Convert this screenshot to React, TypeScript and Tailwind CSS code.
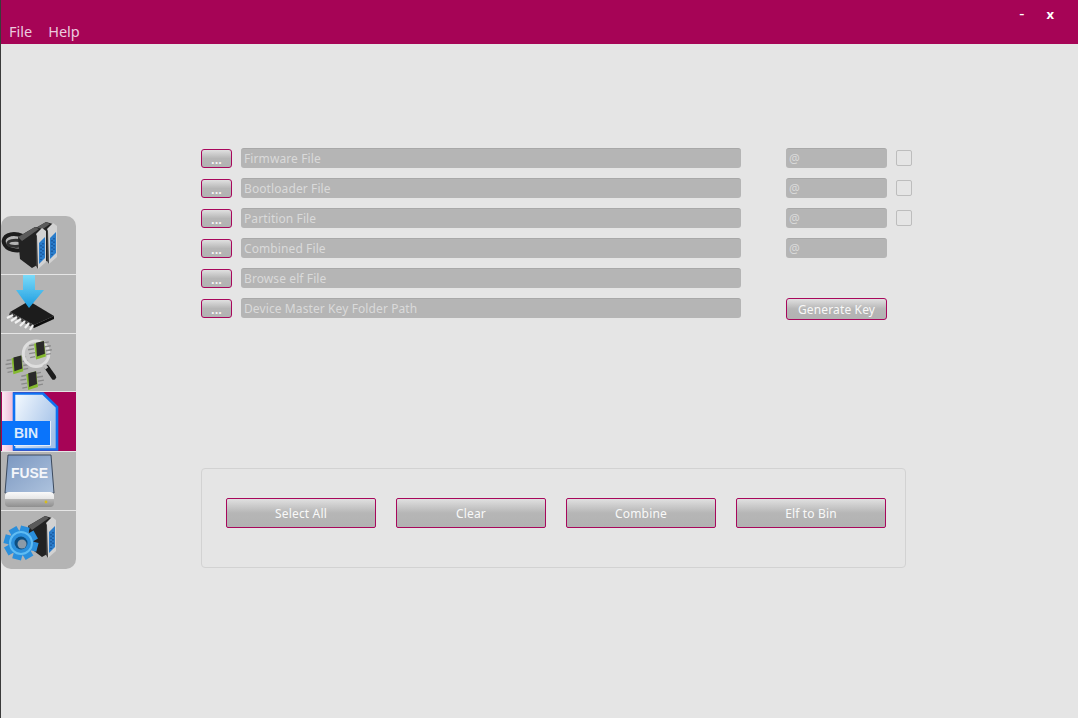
const FIELDS = [
  { label: 'Firmware File', at: true, check: true },
  { label: 'Bootloader File', at: true, check: true },
  { label: 'Partition File', at: true, check: true },
  { label: 'Combined File', at: true, check: false },
  { label: 'Browse elf File', at: false, check: false },
  { label: 'Device Master Key Folder Path', at: false, check: false, generate: true },
];

const ACTIONS = ['Select All', 'Clear', 'Combine', 'Elf to Bin'];

const btnClass =
  'border border-[#a8075c] bg-gradient-to-b from-[#e0e0e0] via-[#b6b6b6] via-50% to-[#b2b2b2] text-[#f9f9f9] text-[12px] tracking-[0.15px]';

// D-sub plug, drawn at the position of the front one in the first icon
function Connector({ x = 0, y = 0 }: { x?: number; y?: number }) {
  return (
    <g transform={`translate(${x} ${y})`}>
      <path d="M17 21 L34 11 L41 13 L38 48 L31 52 L19 43 Z" fill="#222" />
      <path d="M17 21 L34 11 L38 13 L21 25 Z" fill="#5a5a5a" />
      <path d="M35 18 L41 12 L45 15 L45 46 L37 53 L35 50 Z" fill="#d2d2d2" />
      <path d="M35 18 L36 20 L37 53 L35 50 Z" fill="#3a3a3a" />
      <path d="M38 27 L44 21 L44 42 L38 48 Z" fill="#2a7cca" />
      <path d="M40 29v15M42 27v14" stroke="#0d3f80" strokeWidth="1" strokeDasharray="1.5 2" />
    </g>
  );
}

function SerialIcon() {
  return (
    <svg viewBox="0 0 75 58" className="h-full w-full">
      <defs>
        <filter id="soft1"><feGaussianBlur stdDeviation="0.4" /></filter>
      </defs>
      <g filter="url(#soft1)">
        <path d="M22 20 C9 15 1 21 3 27 C5 34 16 36 24 33" fill="none" stroke="#1c1c1c" strokeWidth="4" />
        <path d="M22 25 C12 23 6 25 7 28 C8 31 18 31 24 29" fill="none" stroke="#333" strokeWidth="3" />
        <Connector x={11} y={-5} />
        <Connector />
      </g>
    </svg>
  );
}

function DownloadIcon() {
  return (
    <svg viewBox="0 0 75 58" className="h-full w-full">
      <defs>
        <linearGradient id="arrow" x1="0" y1="0" x2="0" y2="1">
          <stop offset="0" stopColor="#7bdaf8" />
          <stop offset="1" stopColor="#1a9be0" />
        </linearGradient>
        <filter id="soft2"><feGaussianBlur stdDeviation="0.35" /></filter>
      </defs>
      <g filter="url(#soft2)">
        <path d="M9 37 L28 26 L53 41 L33 50 Z" fill="#1d1d1d" />
        <path d="M9 37 L33 50 L33 53 L8 40 Z" fill="#3d3d3d" />
        <path d="M33 50 L53 41 L53 44 L33 53 Z" fill="#0c0c0c" />
        <path
          d="M12 40l-6 3M16 42l-6 4M20 44l-6 4M24 46l-5 5M28 48l-4 5M32 50l-3 5"
          stroke="#f1f1f1"
          strokeWidth="2.2"
          fill="none"
        />
        <path d="M22 0 H34 V15 H43 L28 33 L15 15 H22 Z" fill="url(#arrow)" />
      </g>
    </svg>
  );
}

function Chip({ x, y }: { x: number; y: number }) {
  return (
    <g transform={`translate(${x} ${y})`}>
      <path d="M-10 -3l5 -1M-11 1l6 -1M-10 5l6 -1M-9 9l5 -1M5 -6l5 -1M6 -2l6 -1M7 2l6 -1M7 6l5 -1" stroke="#8a8a8a" strokeWidth="1.4" />
      <path d="M-5 -5 L5 -8 L7 8 L-3 11 Z" fill="#84ba2e" />
      <path d="M-3 -6 L5 -8 L6 5 L-2 8 Z" fill="#2a2a2a" />
    </g>
  );
}

function InspectIcon() {
  return (
    <svg viewBox="0 0 75 58" className="h-full w-full">
      <defs>
        <filter id="soft3"><feGaussianBlur stdDeviation="0.35" /></filter>
      </defs>
      <g filter="url(#soft3)">
        <Chip x={15} y={30} />
        <Chip x={30} y={46} />
        <circle cx="35" cy="20" r="13" fill="#d4d4d4" fillOpacity="0.5" stroke="#dedede" strokeWidth="3" />
        <Chip x={38} y={15} />
        <path d="M46 34 L53 44" stroke="#1b1b1b" strokeWidth="5" strokeLinecap="round" />
        <path d="M43 31 L46 35" stroke="#bdbdbd" strokeWidth="3.5" />
      </g>
    </svg>
  );
}

function BinIcon() {
  return (
    <svg viewBox="0 0 75 59" className="h-full w-full">
      <defs>
        <linearGradient id="page" x1="0" y1="0" x2="1" y2="0.6">
          <stop offset="0" stopColor="#f6fbff" />
          <stop offset="1" stopColor="#a3c1e8" />
        </linearGradient>
        <linearGradient id="edge" x1="0" y1="0" x2="1" y2="0">
          <stop offset="0" stopColor="#fbeaf3" />
          <stop offset="1" stopColor="#efbcd8" />
        </linearGradient>
      </defs>
      <rect x="1" y="0" width="11" height="59" fill="url(#edge)" />
      <path d="M13 1.5 H42 L56 15 V57.5 H13 Z" fill="url(#page)" stroke="#0f72f2" strokeWidth="2.6" />
      <path d="M1 29 H49 V53 H1 Z" fill="#0a74fb" />
      <path d="M49.5 29 V53.5 H13" fill="none" stroke="#e4eefb" strokeWidth="1" />
      <text
        x="13"
        y="46"
        fill="#dceafd"
        fontSize="15"
        fontWeight="700"
        fontFamily="'Liberation Sans', sans-serif"
        textLength="24"
        lengthAdjust="spacingAndGlyphs"
      >
        BIN
      </text>
    </svg>
  );
}

function FuseIcon() {
  return (
    <svg viewBox="0 0 75 58" className="h-full w-full">
      <defs>
        <linearGradient id="drive" x1="0" y1="0" x2="1" y2="1">
          <stop offset="0" stopColor="#7b97c0" />
          <stop offset="1" stopColor="#aec3de" />
        </linearGradient>
        <linearGradient id="base" x1="0" y1="0" x2="0" y2="1">
          <stop offset="0" stopColor="#fafafa" />
          <stop offset="0.45" stopColor="#e6e6e6" />
          <stop offset="0.5" stopColor="#b4b4b4" />
          <stop offset="1" stopColor="#8f8f8f" />
        </linearGradient>
      </defs>
      <path d="M7 3 H50 L53 41 H4 Z" fill="url(#drive)" stroke="#3c4a5e" strokeWidth="1" />
      <rect x="4" y="40" width="49" height="15" rx="4" fill="url(#base)" />
      <circle cx="45" cy="50" r="1.4" fill="#d6bc1c" />
      <text
        x="10"
        y="26"
        fill="#f4f6fa"
        fontSize="14"
        fontWeight="700"
        fontFamily="'Liberation Sans', sans-serif"
        textLength="37"
        lengthAdjust="spacingAndGlyphs"
      >
        FUSE
      </text>
    </svg>
  );
}

function SettingsIcon() {
  return (
    <svg viewBox="0 0 75 58" className="h-full w-full">
      <defs>
        <filter id="soft6"><feGaussianBlur stdDeviation="0.4" /></filter>
      </defs>
      <g filter="url(#soft6)">
        <Connector x={10} y={-6} />
        <g transform="translate(20 32)">
          {[0, 45, 90, 135, 180, 225, 270, 315].map((a) => (
            <rect key={a} x="-4.5" y="-17" width="9" height="9" fill="#2b8fdc" transform={`rotate(${a + 15})`} />
          ))}
          <circle r="12.5" fill="#2b8fdc" />
          <circle r="11" fill="none" stroke="#5fbcf3" strokeWidth="2" />
          <circle r="6.5" fill="#0f4f82" />
          <circle r="4.5" cx="1" cy="1" fill="#8a9aa8" />
        </g>
      </g>
    </svg>
  );
}

const NAV = [
  { Icon: SerialIcon, h: 'h-[58px]' },
  { Icon: DownloadIcon, h: 'h-[58px]' },
  { Icon: InspectIcon, h: 'h-[57px]' },
  { Icon: BinIcon, h: 'h-[59px]', active: true },
  { Icon: FuseIcon, h: 'h-[58px]' },
  { Icon: SettingsIcon, h: 'h-[58px]' },
];

export default function App() {
  return (
    <div className="flex h-[718px] w-[1078px] flex-col overflow-hidden border-l border-[#3a3a3a] bg-[#e5e5e5] font-['Noto_Sans','DejaVu_Sans',sans-serif]">
      <header className="flex h-[44px] shrink-0 flex-col bg-[#a60456]">
        <div className="flex h-[22px] items-start justify-end">
          <span className="mt-[6px] mr-[22px] h-[14px] text-[16px] leading-[14px] text-white">-</span>
          <span className="mt-[6px] mr-[24px] text-[13px] font-bold leading-[16px] text-white">x</span>
        </div>
        <nav className="flex gap-4 pl-2 text-[14.5px] leading-[19px] text-[#eccbdf]">
          <span>File</span>
          <span>Help</span>
        </nav>
      </header>

      <main className="flex flex-1">
        <aside className="mt-[172px] flex h-[353px] w-[75px] shrink-0 flex-col gap-px self-start overflow-hidden rounded-[10px] bg-[#e5e5e5]">
          {NAV.map(({ Icon, h, active }, i) => (
            <div key={i} className={`${h} ${active ? 'bg-[#a60456]' : 'bg-[#b4b4b4]'}`}>
              <Icon />
            </div>
          ))}
        </aside>

        <section className="ml-[125px] flex w-[712px] flex-col pt-[104px]">
          <div className="flex flex-col gap-[10px]">
            {FIELDS.map((f) => (
              <div key={f.label} className="flex h-[20px] items-start">
                <button className={`${btnClass} mt-px flex h-[19px] w-[31px] items-end justify-center rounded-[3px] text-[13px] font-semibold leading-[16px] tracking-[0.6px]`}>
                  ...
                </button>
                <div className="ml-[9px] flex h-[20px] w-[500px] items-center rounded-[3px] border-t border-[#a8a8a8] bg-[#b5b5b5] pl-[3px] text-[12px] tracking-[0.1px] text-[#dadada]">
                  {f.label}
                </div>
                {f.at && (
                  <div className="ml-[45px] flex h-[20px] w-[101px] items-center rounded-[3px] border-t border-[#a8a8a8] bg-[#b5b5b5] pl-[3px] text-[12px] text-[#dadada]">
                    @
                  </div>
                )}
                {f.check && <div className="mt-[2px] ml-[9px] h-[16px] w-[16px] rounded-[2px] border border-[#bdbdbd]" />}
                {f.generate && (
                  <button className={`${btnClass} ml-[45px] h-[22px] w-[101px] rounded-[3px] pt-px`}>Generate Key</button>
                )}
              </div>
            ))}
          </div>

          <div className="mt-[150px] flex h-[100px] w-[705px] items-start gap-5 rounded-[4px] border border-[#d2d2d2] pt-[29px] pl-[24px]">
            {ACTIONS.map((a) => (
              <button key={a} className={`${btnClass} h-[30px] w-[150px] rounded-[2px] pt-px`}>
                {a}
              </button>
            ))}
          </div>
        </section>
      </main>
    </div>
  );
}
